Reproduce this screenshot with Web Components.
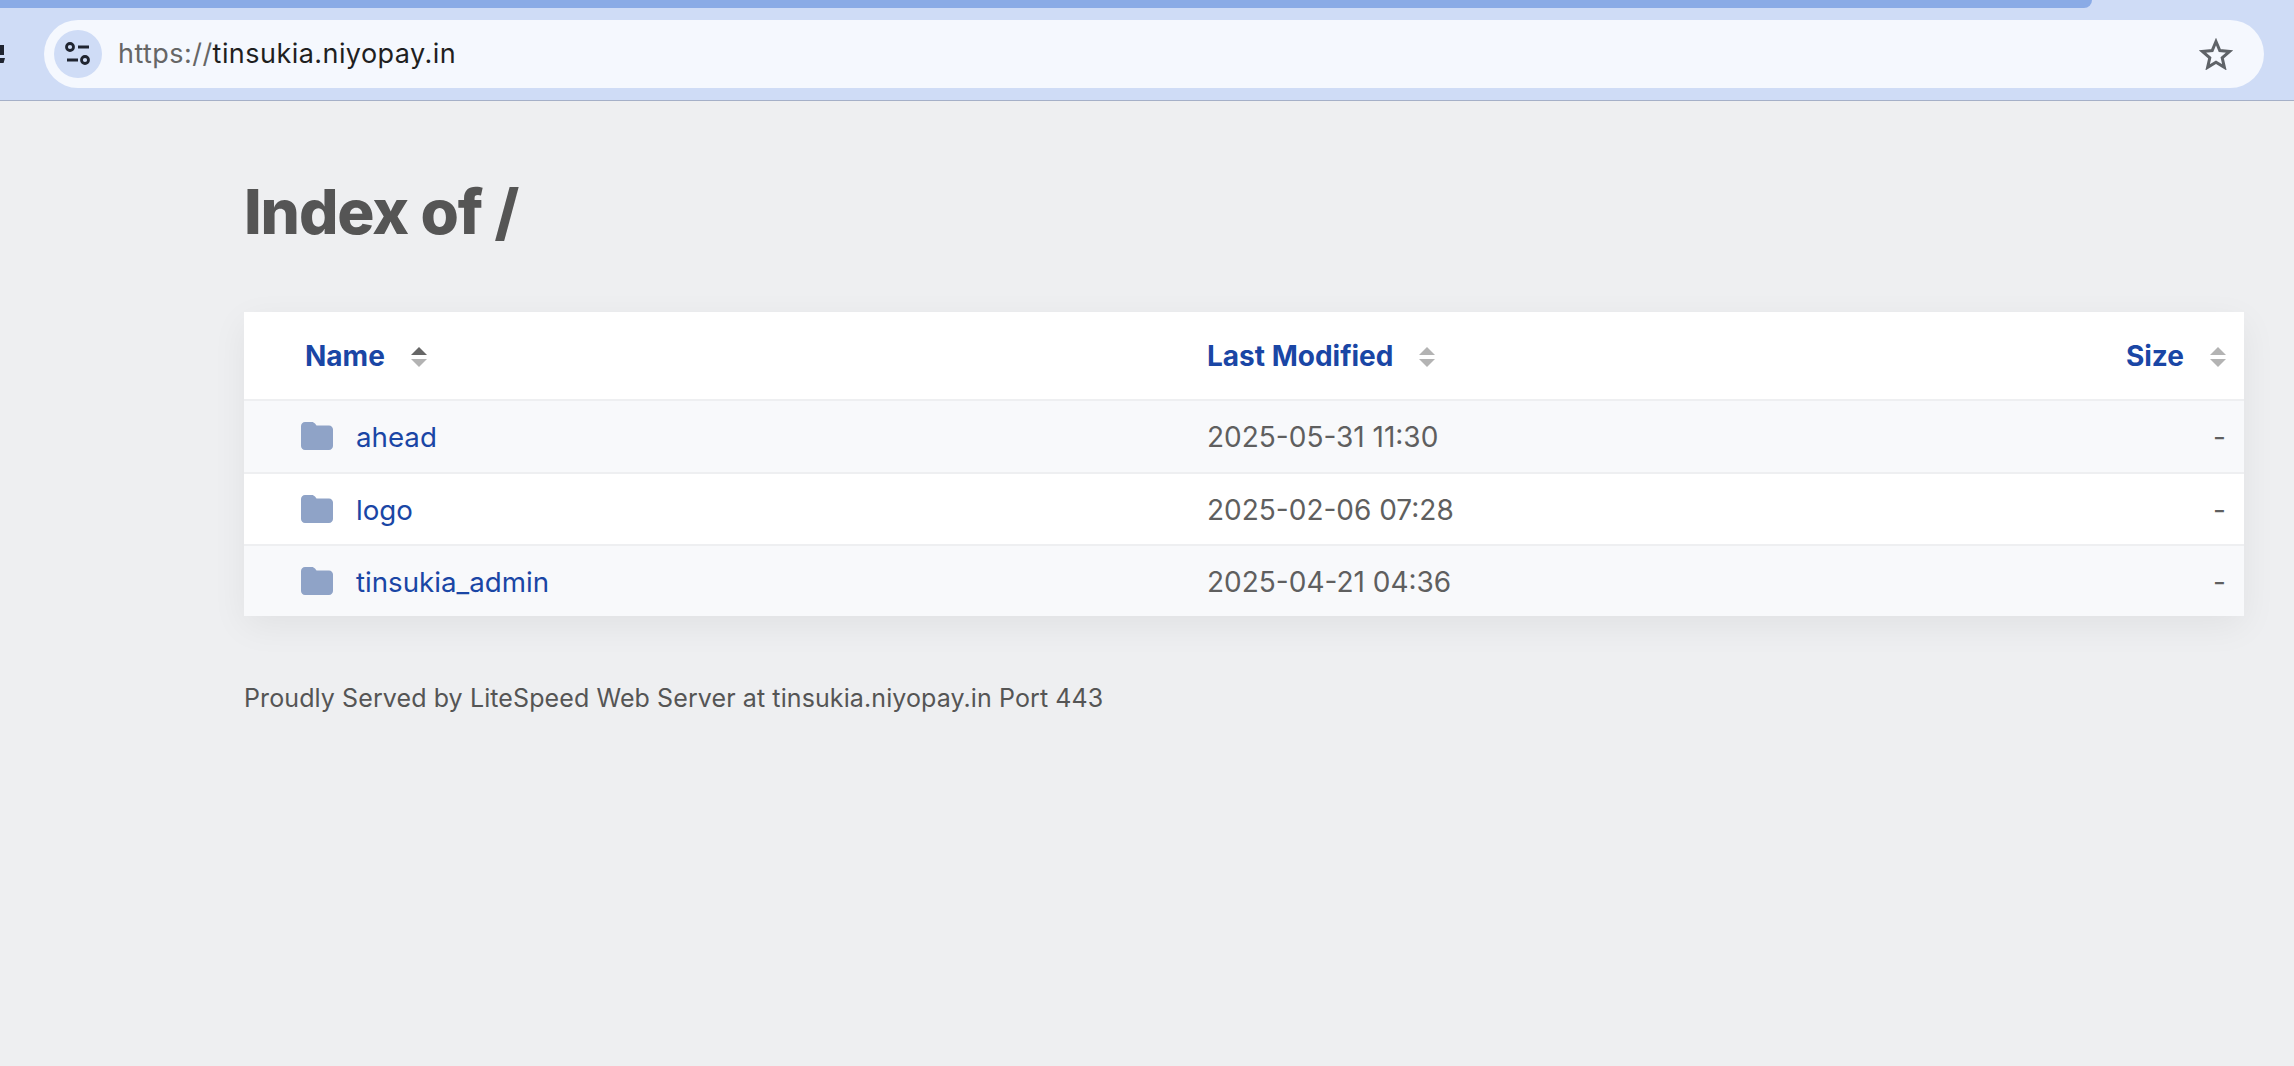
<!DOCTYPE html>
<html><head><meta charset="utf-8"><title>Index of /</title>
<style>html,body{margin:0;padding:0;height:100%;background:#eeeff1;overflow:hidden}body{font-family:Inter,"Liberation Sans",sans-serif}</style>
</head><body>
<browser-bar url-scheme="https://" url-host="tinsukia.niyopay.in"></browser-bar>
<listing-page heading="Index of /" footer="Proudly Served by LiteSpeed Web Server at tinsukia.niyopay.in Port 443">
  <listing-head></listing-head>
  <listing-row name="ahead" date="2025-05-31 11:30" size="-" odd></listing-row>
  <listing-row name="logo" date="2025-02-06 07:28" size="-"></listing-row>
  <listing-row name="tinsukia_admin" date="2025-04-21 04:36" size="-" odd last></listing-row>
</listing-page>
<script>
const sortIcon=(up,down)=>`<svg width="16" height="20" viewBox="0 0 16 20"><path d="M8 0L16 8H0Z" fill="${up}"/><path d="M8 20L0 12H16Z" fill="${down}"/></svg>`;
const COLS='display:grid;grid-template-columns:963px 1fr 220px;';
customElements.define('browser-bar',class extends HTMLElement{connectedCallback(){const s=this.attachShadow({mode:'open'});
s.innerHTML=`<style>
:host{display:block;height:101px;box-sizing:border-box;background:#cfdcf6;border-bottom:1px solid #a5b0c8;position:relative;font:26px Inter,"Liberation Sans",sans-serif}
.tab{height:8px;width:2092px;background:#8aabe6;border-radius:0 0 20px 0}
.pill{margin:12px 30px 0 44px;height:68px;border-radius:34px;background:#f5f8fe;display:flex;align-items:center;padding:0 31px 0 10px;box-sizing:border-box}
.tune{width:48px;height:48px;border-radius:50%;background:#cfdcf6;display:flex;align-items:center;justify-content:center;flex:none}
.url{margin-left:16px;flex:1;color:#1f1f1f;letter-spacing:.45px;font-size:27px;line-height:68px}.url span{color:#666}
.star{flex:none}
.edge{position:absolute;left:0;top:41px;width:5px;height:22px;overflow:hidden}
</style>
<div class="edge"><svg width="5" height="22" viewBox="0 0 5 22"><path d="M0 1H4V11H0Z" fill="#1f2430"/><path d="M0 14H5L3 21H0Z" fill="#1f2430"/></svg></div>
<div class="tab"></div>
<div class="pill"><div class="tune"><svg width="26" height="26" viewBox="0 0 26 26" fill="none" stroke="#1f2430" stroke-width="2.800"><circle cx="5" cy="6" r="3.500"/><path d="M13 6H24M2 19H13"/><circle cx="20" cy="19" r="3.500"/></svg></div>
<div class="url"><span>${this.getAttribute('url-scheme')}</span>${this.getAttribute('url-host')}</div>
<svg class="star" width="34" height="32" viewBox="0 0 34 32"><path d="M17 3.500L20.800 12.600L30.600 13.400L23.200 19.800L25.400 29.400L17 24.300L8.600 29.400L10.800 19.800L3.400 13.400L13.200 12.600Z" fill="none" stroke="#5f6368" stroke-width="3"/></svg></div>`}});
customElements.define('listing-page',class extends HTMLElement{connectedCallback(){const s=this.attachShadow({mode:'open'});
s.innerHTML=`<style>
:host{display:block;padding:0 50px 0 244px;color:#555;font-family:Inter,"Liberation Sans",sans-serif}
h1{margin:0;padding-top:76px;font-size:62px;line-height:70px;font-weight:800;letter-spacing:-1.1px;color:#555}
.table{margin-top:65px;background:#fff;box-shadow:0 10px 34px rgba(0,0,0,.06)}
p{margin:67px 0 0;font-size:25px;line-height:32px;letter-spacing:.1px;position:relative;top:-1px}
</style><h1>${this.getAttribute('heading')}</h1><div class="table"><slot></slot></div><p>${this.getAttribute('footer')}</p>`}});
customElements.define('listing-head',class extends HTMLElement{connectedCallback(){const s=this.attachShadow({mode:'open'});
s.innerHTML=`<style>
:host{${COLS}height:89px;box-sizing:border-box;border-bottom:2px solid #eeeff1;align-items:center;color:#1a46a5;font-size:28px;font-weight:700;padding-top:1px}
div{display:flex;align-items:center}.n{padding-left:61px;gap:26px}.m{gap:26px}.s{justify-content:flex-end;padding-right:18px;gap:26px}svg{position:relative;top:1px}
</style><div class="n">Name ${sortIcon('#666','#b3b3b3')}</div><div class="m">Last Modified ${sortIcon('#b3b3b3','#b3b3b3')}</div><div class="s">Size ${sortIcon('#b3b3b3','#b3b3b3')}</div>`}});
customElements.define('listing-row',class extends HTMLElement{connectedCallback(){const s=this.attachShadow({mode:'open'});
s.innerHTML=`<style>
:host{${COLS}height:72.500px;box-sizing:border-box;align-items:center;font-size:28px;color:#5f5f5f;background:#fff;border-bottom:2px solid #eeeff1;padding-top:2px}
:host([odd]){background:#f8f9fb}:host([last]){border-bottom:0;height:70px}
.n{display:flex;align-items:center;padding-left:57px;gap:23px;color:#1a46a5;font-size:27.700px}.s{text-align:right;padding-right:18px}
</style><div class="n"><svg width="32" height="28" viewBox="0 0 32 28" style="position:relative;top:-1px"><path d="M4 0H11C12 0 13 .5 14 1.600L15.500 3.500H28C30.200 3.500 32 5.300 32 7.500V24C32 26.200 30.200 28 28 28H4C1.800 28 0 26.200 0 24V4C0 1.800 1.800 0 4 0Z" fill="#8fa3c7"/></svg>${this.getAttribute('name')}</div><div>${this.getAttribute('date')}</div><div class="s">${this.getAttribute('size')}</div>`}});
</script></body></html>
